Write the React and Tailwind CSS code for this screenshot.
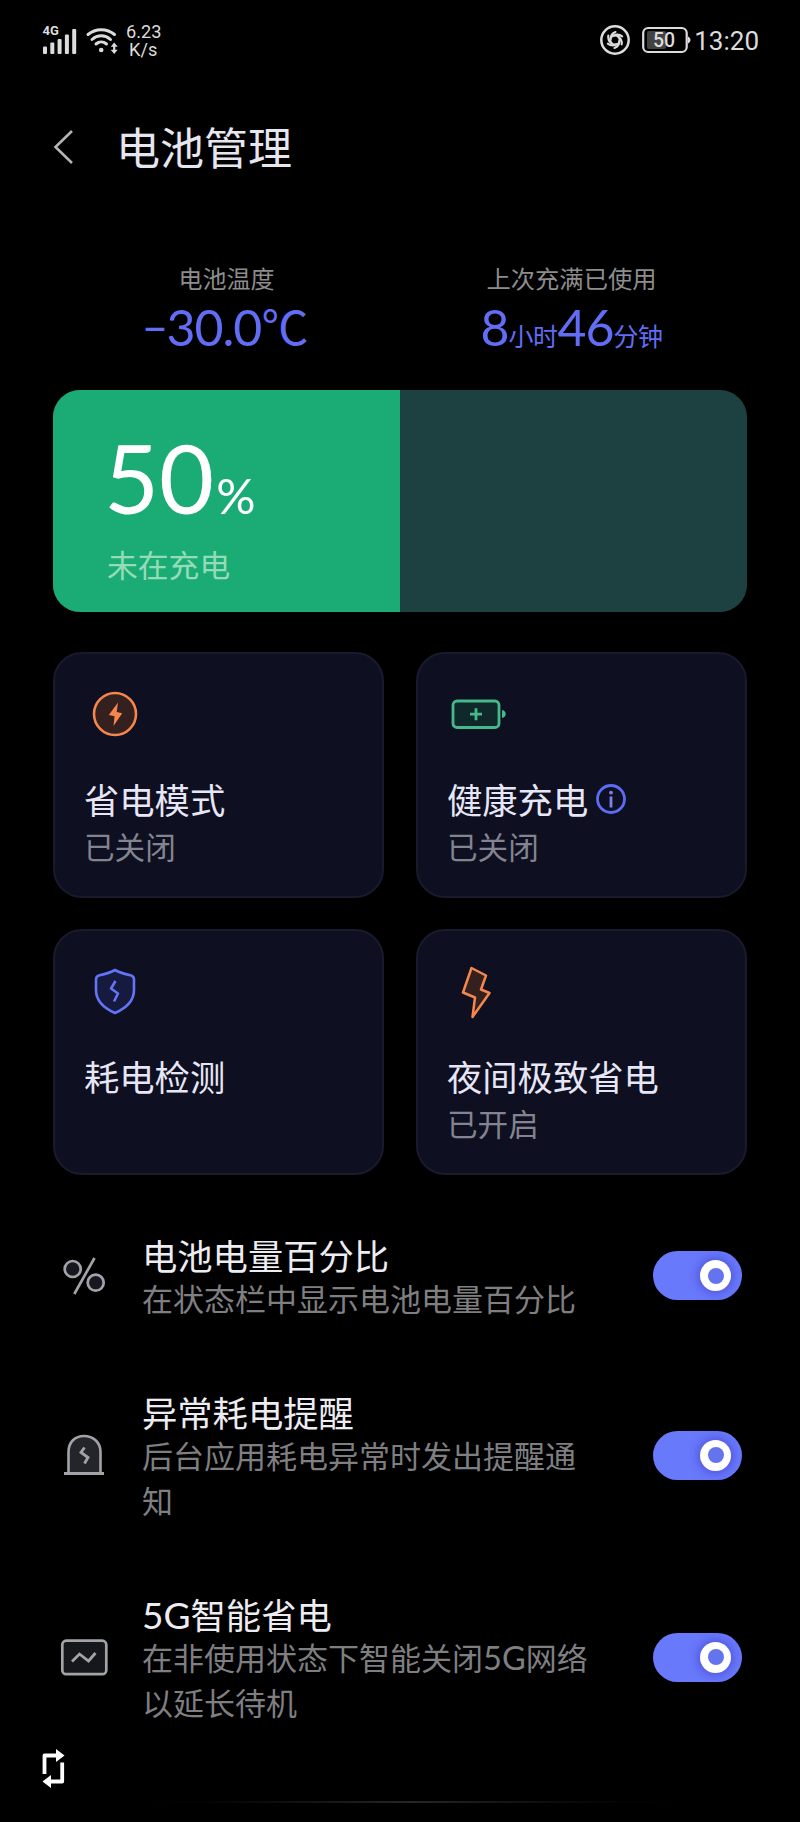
import React from 'react';

const CJK = "font-['Noto_Sans_CJK_SC',sans-serif]";
const LATIN = "font-['Roboto','Noto_Sans_CJK_SC',sans-serif]";
const NUM = "font-['Lato','Noto_Sans_CJK_SC',sans-serif]";

const BLADES = [0, 60, 120, 180, 240, 300];

function StatusBar() {
  return (
    <header className={`flex h-[80px] items-center justify-between pl-[42px] pr-[41px] text-[#dcdcdc] ${LATIN}`}>
      <div className="flex items-center">
        <svg className="h-[32px] w-[35px]" viewBox="0 0 35 32" fill="currentColor">
          <text x="0.500" y="10.500" fontSize="13" fontWeight="700" fontFamily="Roboto, sans-serif">4G</text>
          <rect x="1" y="22.500" width="4" height="7.500" rx="1" />
          <rect x="8.300" y="18.500" width="4" height="11.500" rx="1" />
          <rect x="15.600" y="15" width="4" height="15" rx="1" />
          <rect x="22.900" y="10.500" width="4" height="19.500" rx="1" />
          <rect x="30.200" y="5" width="4" height="25" rx="1" />
        </svg>
        <svg className="ml-[8px] h-[30px] w-[34px]" viewBox="0 0 34 30" fill="none" stroke="currentColor" strokeWidth="3" strokeLinecap="round">
          <path d="M3 9.500C10.500 3 22 3 29.500 9.500" />
          <path d="M7 14.500C12.500 9.600 20 9.600 25.500 14.500" />
          <path d="M11 19C14.200 16.200 18.300 16.200 21.500 19" />
          <circle cx="16.200" cy="25" r="2.300" fill="currentColor" stroke="none" />
          <path d="M29.200 17.500l3.500 4.300h-7zM29.200 29l3.500-4.300h-7z" fill="currentColor" stroke="none" />
          <path d="M29.200 21v4" strokeWidth="2.200" />
        </svg>
        <div className="ml-[7px] mt-[1px] flex flex-col text-[18.200px] leading-[18px]">
          <span>6.23</span>
          <span className="pl-[3px]">K/s</span>
        </div>
      </div>
      <div className="flex items-center">
        <svg className="h-[32px] w-[32px]" viewBox="0 0 32 32" fill="none" stroke="currentColor" strokeLinecap="round">
          <circle cx="16" cy="16" r="13.700" strokeWidth="2.500" />
          <circle cx="16" cy="16" r="4.700" strokeWidth="2.200" />
          {BLADES.map((angle) => (
            <path key={angle} d="M11.600 15C11.600 11.800 13.200 9.300 16.500 8" strokeWidth="2.100" transform={`rotate(${angle} 16 16)`} />
          ))}
        </svg>
        <svg className="ml-[11px] h-[28px] w-[50px]" viewBox="0 0 50 28">
          <rect x="5" y="5" width="19" height="18" rx="2" fill="#424242" />
          <rect x="1.200" y="2" width="43.500" height="24" rx="5" fill="none" stroke="currentColor" strokeWidth="2.200" />
          <path d="M46 10.500c3.300 1.500 3.300 5.500 0 7z" fill="currentColor" />
          <text x="22" y="20.800" textAnchor="middle" fontSize="19.500" fontWeight="500" fontFamily="Roboto, sans-serif" fill="currentColor">50</text>
        </svg>
        <span className="ml-[2px] mt-[2px] text-[26px] leading-[32px]">13:20</span>
      </div>
    </header>
  );
}

function PowerIcon() {
  return (
    <svg className="h-[60px] w-[60px]" viewBox="0 0 60 60">
      <circle cx="31" cy="30" r="21" fill="#33201f" stroke="#f5874c" strokeWidth="2.600" />
      <path d="M34 18.500L24.800 31l5.700 1.300L29.500 42l8.700-12.800-5.500-1.200z" fill="#f5874c" />
    </svg>
  );
}

function ChargeIcon() {
  return (
    <svg className="h-[60px] w-[60px]" viewBox="0 0 60 60">
      <rect x="6" y="17" width="46" height="26.500" rx="4" fill="#11282a" stroke="#45b98a" strokeWidth="2.800" />
      <path d="M55 26c5 1 5 7 0 8z" fill="#45b98a" />
      <path d="M29 24.200v12M23 30.200h12" stroke="#45b98a" strokeWidth="2.800" fill="none" />
    </svg>
  );
}

function ShieldIcon() {
  return (
    <svg className="h-[60px] w-[60px]" viewBox="0 0 60 60" fill="none" stroke="#6374f6" strokeWidth="2.600" strokeLinejoin="round">
      <path d="M31 9C35.500 11.500 41 13 46.500 14.200C49 14.800 50 16 50 18.500V29C50 39 42.500 47 31 52C19.500 47 12 39 12 29V18.500C12 16 13 14.800 15.500 14.200C21 13 26.500 11.500 31 9Z" fill="#151a3e" />
      <path d="M31.500 20L27 27.500L34 32.500L30 40.500" />
    </svg>
  );
}

function BoltIcon() {
  return (
    <svg className="h-[60px] w-[60px]" viewBox="0 0 60 60">
      <path d="M24.500 7L39 14.500L34 28.500L42.500 32L25.500 56L28 36.500L16 31.500Z" fill="#33201f" stroke="#f5874c" strokeWidth="2.500" strokeLinejoin="round" />
    </svg>
  );
}

function InfoIcon() {
  return (
    <svg className="ml-[7px] h-[32px] w-[32px]" viewBox="0 0 32 32">
      <circle cx="16" cy="16" r="13.500" fill="none" stroke="#5c6cf5" strokeWidth="2.800" />
      <circle cx="16" cy="9.600" r="1.900" fill="#7d83ee" />
      <path d="M16 13.500v11" stroke="#7d83ee" strokeWidth="2.800" />
    </svg>
  );
}

function Card({ icon, title, status, info }) {
  return (
    <section className="flex h-[246px] flex-col rounded-[29px] border-2 border-[#191a2b] bg-[#0e0f20] pl-[29px] pt-[30px]">
      {icon}
      <div className="mt-[33px] flex h-[44px] items-center">
        <h2 className="text-[35.300px] leading-[44px] text-[#e6e6f6]">{title}</h2>
        {info && <InfoIcon />}
      </div>
      {status && <p className="mt-[3px] text-[30.600px] leading-[44px] text-[#83848f]">{status}</p>}
    </section>
  );
}

function Toggle() {
  return (
    <div className="flex h-[49px] w-[89px] shrink-0 items-center justify-end rounded-full bg-[#6979fb] pr-[11px]">
      <div className="flex h-[31px] w-[31px] items-center justify-center rounded-full bg-white shadow-[0_0_8px_3px_rgba(70,70,210,0.65)]">
        <div className="h-[16px] w-[16px] rounded-full bg-[#6474ee]" />
      </div>
    </div>
  );
}

function PercentIcon() {
  return (
    <svg className="h-[50px] w-[50px]" viewBox="0 0 50 50" fill="none" stroke="#a2a2a8" strokeWidth="2.700">
      <circle cx="13.700" cy="18" r="8" fill="#17171f" />
      <circle cx="36.700" cy="31.700" r="8" fill="#17171f" />
      <path d="M35.500 7L15.300 43" />
    </svg>
  );
}

function AlertIcon() {
  return (
    <svg className="h-[50px] w-[50px]" viewBox="0 0 50 50" fill="none" stroke="#a2a2a8" strokeWidth="2.600">
      <path d="M9.500 42.500V21C9.500 11 16 5 25 5S41.500 11 41.500 21V42.500" fill="#24252b" />
      <path d="M5 42.500H45" strokeWidth="3" />
      <path d="M25.500 16.500L22 21.500L29 26.500L25.500 32.500" strokeWidth="2.800" />
    </svg>
  );
}

function NetworkIcon() {
  return (
    <svg className="h-[50px] w-[50px]" viewBox="0 0 50 50" fill="none" stroke="#a2a4a8" strokeWidth="2.700">
      <rect x="3.300" y="7.700" width="44" height="33.500" rx="4" fill="#15171a" />
      <path d="M13 28.500L20.500 21L29.500 28L36.500 20" strokeWidth="2.800" />
    </svg>
  );
}

function SettingRow({ icon, title, text }) {
  return (
    <div className="flex items-center pl-[59px] pr-[58px]">
      <div className="-mt-[3px] w-[50px] shrink-0">{icon}</div>
      <div className="ml-[33px] w-[458px]">
        <h3 className="text-[35.300px] leading-[40px] text-[#ececf2]">{title}</h3>
        <p className="text-[31px] leading-[45px] text-[#7f7f82]">{text}</p>
      </div>
      <div className="-mt-[4px] ml-auto">
        <Toggle />
      </div>
    </div>
  );
}

export default function App() {
  const fiveG = <span className={`text-[1.05em] leading-[20px] ${NUM}`}>5G</span>;

  return (
    <div className={`flex h-[1822px] w-[800px] flex-col overflow-hidden bg-black ${CJK}`}>
      <StatusBar />

      <div className="flex h-[130px] items-center pl-[53px]">
        <svg className="mt-[4px] h-[36px] w-[22px]" viewBox="0 0 22 36" fill="none" stroke="#b4b4b4" strokeWidth="2.600">
          <path d="M19 2L2.500 18L19 34" />
        </svg>
        <h1 className="ml-[41px] mt-[1px] text-[44px] leading-[52px] text-[#e6e6ee]">电池管理</h1>
      </div>

      <div className="flex h-[180px] pl-[53px] pr-[53px] pt-[53px]">
        <div className="flex w-[347px] flex-col items-center">
          <p className="text-[24px] leading-[30px] text-[#8d8d8d]">电池温度</p>
          <p className={`-ml-[3px] flex items-baseline pt-[1px] text-[50px] leading-[66px] tracking-[-1px] text-[#626df5] ${NUM}`}>
            <span className="-translate-y-[2px] text-[43px] font-medium leading-[40px]">−</span>
            30.0
            <span className={`-translate-y-[1px] text-[47px] leading-[40px] ${CJK}`}>℃</span>
          </p>
        </div>
        <div className="-ml-[2px] flex w-[347px] flex-col items-center">
          <p className="text-[24.300px] leading-[30px] text-[#8d8d8d]">上次充满已使用</p>
          <p className={`flex items-baseline pt-[1px] text-[50px] leading-[66px] tracking-[-1px] text-[#626df5] ${NUM}`}>
            8<span className="text-[25px] tracking-[-0.500px]">小时</span>46<span className="text-[25px] tracking-[-0.500px]">分钟</span>
          </p>
        </div>
      </div>

      <section className="mx-[53px] flex h-[222px] overflow-hidden rounded-[27px] bg-[#1d4140]">
        <div className="flex w-[347px] flex-col bg-[#1bac76] pl-[54px] pt-[40px]">
          <p className={`-ml-[3px] flex items-baseline text-[95px] leading-[95px] text-white ${NUM}`}>
            50<span className="ml-[2px] text-[49px] leading-[48px]">%</span>
          </p>
          <p className="mt-[17px] text-[30.800px] leading-[44px] text-[#94dcb8]">未在充电</p>
        </div>
      </section>

      <div className="mx-[53px] mt-[40px] grid grid-cols-2 gap-x-[32px] gap-y-[31px]">
        <Card icon={<PowerIcon />} title="省电模式" status="已关闭" />
        <Card icon={<ChargeIcon />} title="健康充电" status="已关闭" info />
        <Card icon={<ShieldIcon />} title="耗电检测" />
        <Card icon={<BoltIcon />} title="夜间极致省电" status="已开启" />
      </div>

      <div className="mt-[60px] flex flex-col gap-[72px]">
        <SettingRow icon={<PercentIcon />} title="电池电量百分比" text="在状态栏中显示电池电量百分比" />
        <SettingRow icon={<AlertIcon />} title="异常耗电提醒" text="后台应用耗电异常时发出提醒通知" />
        <SettingRow icon={<NetworkIcon />} title={<>{fiveG}智能省电</>} text={<>在非使用状态下智能关闭{fiveG}网络以延长待机</>} />
      </div>

      <svg className="ml-[40px] mt-[23px] h-[42px] w-[26px] shrink-0" viewBox="0 0 26 42" fill="none" stroke="#ffffff" strokeWidth="3.800">
        <path d="M4.500 27V8.500H18" strokeLinejoin="round" />
        <path d="M16 2L24.500 8.500L16 15Z" fill="#ffffff" stroke="none" />
        <path d="M22.200 15.500V34.500H9" strokeLinejoin="round" />
        <path d="M11 28L2.500 34.500L11 41Z" fill="#ffffff" stroke="none" />
      </svg>
      <div className="ml-[78px] mr-[53px] mt-[12px] h-[2px] shrink-0 bg-linear-to-r from-black via-[#262626] to-black" />
    </div>
  );
}
